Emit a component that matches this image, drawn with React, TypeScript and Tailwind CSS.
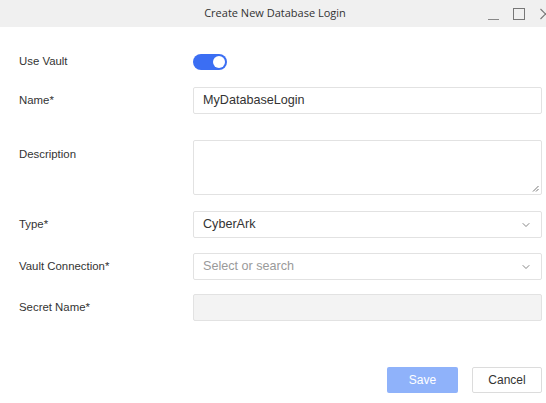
import { ChevronDown } from "lucide-react";

function Label({ children }: { children: React.ReactNode }) {
  return <div className="w-[174px] shrink-0 text-[11.4px] text-[#333]">{children}</div>;
}

export default function App() {
  return (
    <div className="w-[546px] h-[403px] bg-white overflow-hidden font-['Liberation_Sans',Arial,sans-serif]">
      <div className="relative h-[27px] bg-[#f0f0f0] flex items-center justify-center">
        <span className="text-[11px] text-[#333] font-['Open_Sans',sans-serif] pl-[4px]">Create New Database Login</span>
        <div className="absolute left-[488px] top-0 h-full flex items-center">
          <div className="w-[11px] h-[1px] bg-[#888] mt-[12px]" />
          <div className="w-[12px] h-[12px] border border-[#777] ml-[14px]" />
          <svg width="11" height="12" viewBox="0 0 11 12" className="ml-[15px] shrink-0">
            <path d="M0.5 1 L10.5 11 M0.5 11 L10.5 1" stroke="#777" strokeWidth="1.1" fill="none" />
          </svg>
        </div>
      </div>

      <div className="pl-[19px] pr-[4px]">
        <div className="flex items-center mt-[27px] h-[16px]">
          <Label>Use Vault</Label>
          <div className="w-[34px] h-[16px] rounded-full bg-[#3b6ef3] flex items-center justify-end pr-[2px]">
            <div className="w-[12px] h-[12px] rounded-full bg-white" />
          </div>
        </div>

        <div className="flex items-center mt-[17px]">
          <Label>Name*</Label>
          <div className="flex-1 h-[27px] border border-[#e2e2e2] rounded-[2px] flex items-center px-[9px] text-[12.6px] text-[#333]">
            MyDatabaseLogin
          </div>
        </div>

        <div className="flex items-start mt-[26px]">
          <div className="pt-[6px]">
            <Label>Description</Label>
          </div>
          <div className="relative flex-1 h-[55px] border border-[#e2e2e2] rounded-[2px]">
            <svg width="7" height="7" viewBox="0 0 7 7" className="absolute right-[2px] bottom-[2px]">
              <path d="M6.5 1 L1 6.5 M6.5 4 L4 6.5" stroke="#666" strokeWidth="0.9" />
            </svg>
          </div>
        </div>

        <div className="flex items-center mt-[16px]">
          <Label>Type*</Label>
          <div className="flex-1 h-[27px] border border-[#e2e2e2] rounded-[2px] flex items-center justify-between pl-[9px] pr-[9px] text-[12.6px] text-[#333]">
            <span>CyberArk</span>
            <ChevronDown size={12} strokeWidth={1.8} className="text-[#777]" />
          </div>
        </div>

        <div className="flex items-center mt-[15px]">
          <Label>Vault Connection*</Label>
          <div className="flex-1 h-[27px] border border-[#e2e2e2] rounded-[2px] flex items-center justify-between pl-[9px] pr-[9px] text-[12.6px] text-[#9a9a9a]">
            <span>Select or search</span>
            <ChevronDown size={12} strokeWidth={1.8} className="text-[#777]" />
          </div>
        </div>

        <div className="flex items-center mt-[14px]">
          <Label>Secret Name*</Label>
          <div className="flex-1 h-[27px] border border-[#e2e2e2] rounded-[2px] bg-[#f3f3f3]" />
        </div>

        <div className="flex justify-end gap-[14px] mt-[46px]">
          <button className="w-[71px] h-[26px] rounded-[2px] bg-[#8fb2fa] text-white text-[12px]">Save</button>
          <button className="w-[70px] h-[26px] rounded-[2px] border border-[#dcdcdc] bg-white text-[#333] text-[12px]">Cancel</button>
        </div>
      </div>
    </div>
  );
}
